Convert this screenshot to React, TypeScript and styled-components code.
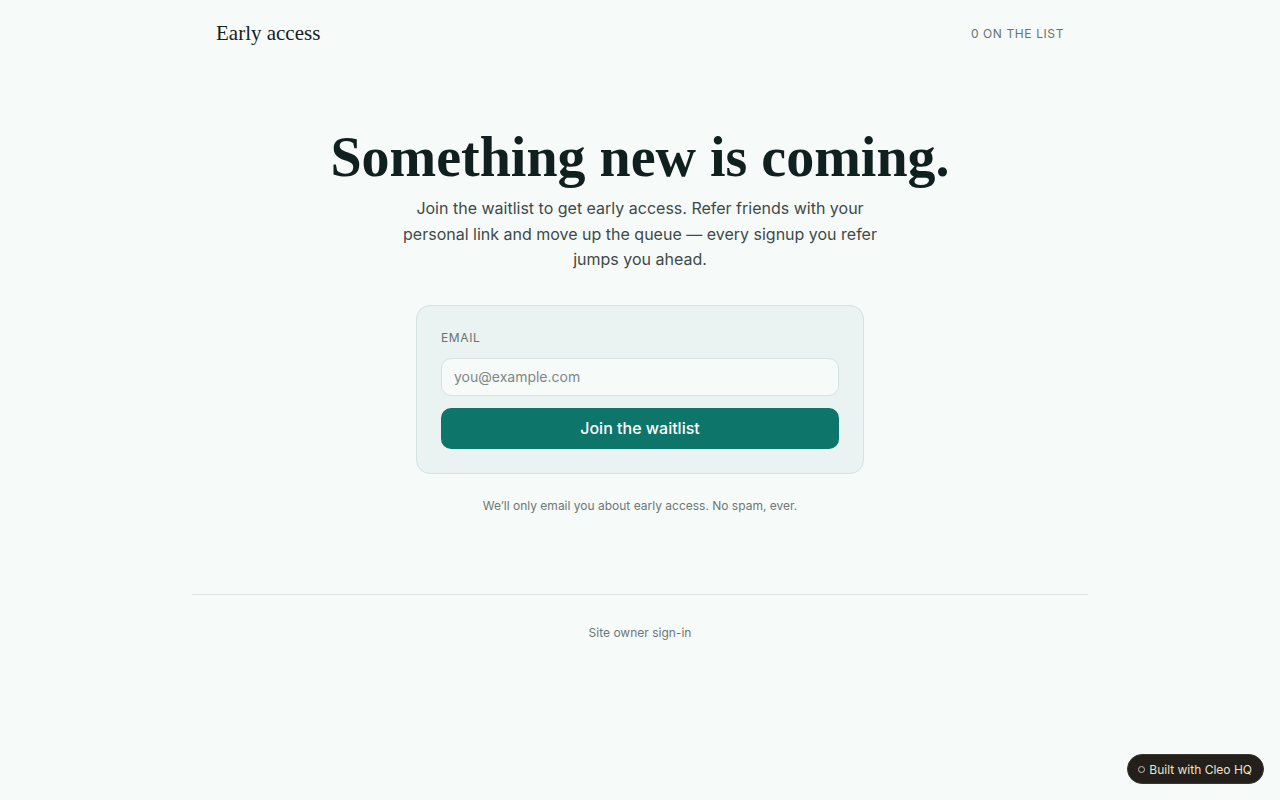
import React from 'react';
import styled, { createGlobalStyle } from 'styled-components';

const GlobalStyle = createGlobalStyle`
    * { box-sizing: border-box; }
    html, body { margin: 0; padding: 0; }
    body {
        background: #f6faf9;
        font-family: 'Inter', 'Liberation Sans', sans-serif;
        color: #1a2b29;
        -webkit-font-smoothing: antialiased;
    }
`;

const Page = styled.div`
    min-height: 800px;
    display: flex;
    flex-direction: column;
    align-items: center;
`;

const Shell = styled.div`
    width: 896px;
    display: flex;
    flex-direction: column;
`;

const Header = styled.header`
    display: flex;
    justify-content: space-between;
    align-items: center;
    height: 67px;
    padding: 0 24px;
`;

const Brand = styled.div`
    font-family: 'Liberation Serif', 'DejaVu Serif', serif;
    font-size: 21px;
    color: #14201f;
`;

const Counter = styled.div`
    font-size: 12px;
    font-weight: 400;
    letter-spacing: 0.05em;
    color: #66726f;
`;

const Hero = styled.main`
    display: flex;
    flex-direction: column;
    align-items: center;
    padding-top: 58px;
`;

const Title = styled.h1`
    margin: 0;
    font-family: 'Liberation Serif', 'DejaVu Serif', serif;
    font-weight: 700;
    font-size: 56px;
    line-height: 64px;
    color: #10201e;
`;

const Lead = styled.p`
    margin: 7px 0 0;
    max-width: 480px;
    text-align: center;
    font-size: 16px;
    line-height: 25.6px;
    color: #3d4a48;
`;

const Card = styled.form`
    margin-top: 32px;
    width: 448px;
    padding: 24px;
    background: #ebf3f2;
    border: 1px solid #d4e2e0;
    border-radius: 14px;
    display: flex;
    flex-direction: column;
`;

const Label = styled.label`
    font-size: 12px;
    font-weight: 400;
    letter-spacing: 0.05em;
    text-transform: uppercase;
    color: #66726f;
    line-height: 16px;
    margin-bottom: 12px;
`;

const Input = styled.input`
    height: 38px;
    padding: 0 12px;
    border: 1px solid #d6e2e0;
    border-radius: 10px;
    background: #f6faf9;
    font-family: inherit;
    font-size: 14px;
    color: #1a2b29;
    outline: none;

    &::placeholder {
        color: #7d8886;
    }
`;

const Submit = styled.button`
    margin-top: 12px;
    height: 41px;
    border: none;
    border-radius: 10px;
    background: #0e756b;
    color: #ffffff;
    font-family: inherit;
    font-size: 16px;
    font-weight: 500;
    cursor: pointer;
`;

const Note = styled.p`
    margin: 24px 0 0;
    font-size: 12px;
    color: #6d7876;
`;

const Footer = styled.footer`
    margin-top: 81px;
    border-top: 1px solid #dbe3e2;
    display: flex;
    justify-content: center;
    padding-top: 30px;
`;

const FooterLink = styled.a`
    font-size: 12px;
    color: #6d7876;
    text-decoration: none;
`;

const Badge = styled.a`
    position: fixed;
    right: 16px;
    bottom: 16px;
    height: 30px;
    padding: 0 11px 0 10px;
    display: flex;
    align-items: center;
    gap: 4px;
    background: #231f1b;
    border: 1px solid #3a352f;
    border-radius: 999px;
    color: #efe3cc;
    font-size: 12px;
    text-decoration: none;
`;

const Dot = styled.span`
    width: 7px;
    height: 7px;
    border: 1px solid #c9bfae;
    border-radius: 50%;
`;

const App: React.FC = () => {
    return (
        <>
            <GlobalStyle />
            <Page>
                <Shell>
                    <Header>
                        <Brand>Early access</Brand>
                        <Counter>0 ON THE LIST</Counter>
                    </Header>

                    <Hero>
                        <Title>Something new is coming.</Title>
                        <Lead>
                            Join the waitlist to get early access. Refer friends with your personal link and
                            move up the queue — every signup you refer jumps you ahead.
                        </Lead>

                        <Card onSubmit={e => e.preventDefault()}>
                            <Label htmlFor="email">Email</Label>
                            <Input id="email" type="email" placeholder="you@example.com" />
                            <Submit type="submit">Join the waitlist</Submit>
                        </Card>

                        <Note>We’ll only email you about early access. No spam, ever.</Note>
                    </Hero>

                    <Footer>
                        <FooterLink href="#">Site owner sign-in</FooterLink>
                    </Footer>
                </Shell>
            </Page>
            <Badge href="#">
                <Dot />
                Built with Cleo HQ
            </Badge>
        </>
    );
};

export default App;
